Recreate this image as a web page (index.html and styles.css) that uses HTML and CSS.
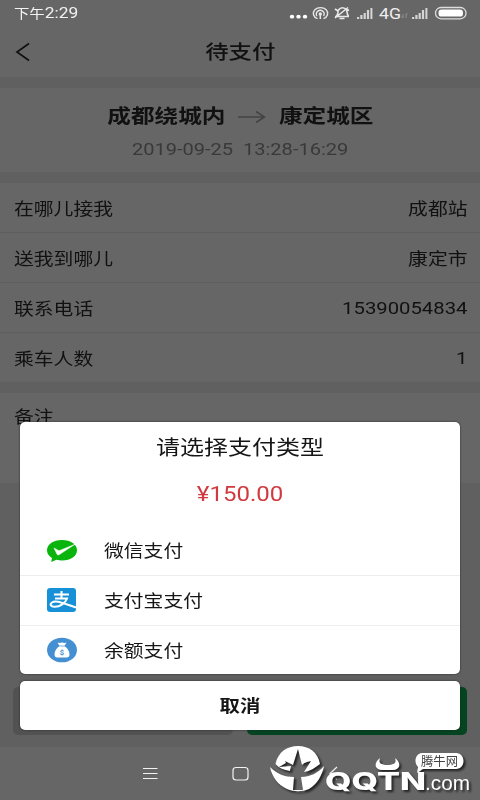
FILE: index.html
```html
<!DOCTYPE html>
<html lang="zh-CN">
<head>
<meta charset="utf-8">
<title>待支付</title>
<link rel="stylesheet" href="styles.css">
</head>
<body>
<div class="screen">
  <div class="status">
    <span class="wide left clock">下午<span class="clock-num">2:29</span></span>
    <svg class="status-icons" width="186" height="28" viewBox="0 0 186 28" fill="none" stroke="#e8e8e8">
      <g fill="#fff" stroke="none"><ellipse cx="8" cy="16.700" rx="2.200" ry="1.900"/><ellipse cx="14.500" cy="16.700" rx="2.200" ry="1.900"/><ellipse cx="21" cy="16.700" rx="2.200" ry="1.900"/></g>
      <path d="M33.500 18.700A7.200 5.800 0 1 1 39.500 18.700M33 16A4 3.500 0 1 1 39.500 16" stroke-width="1.400"/>
      <circle cx="36.300" cy="14" r="1.700" fill="#e8e8e8" stroke="none"/><path d="M36.300 14v5" stroke-width="1.500"/>
      <path d="M51 16.500h14M52.500 16c2-2 1-4 2-6 2-3 6-3 8 0 1 2 0 4 2 6M55.500 18.500h5M51 18 64 7.500M51 9l3 2M62 9l3 1.500" stroke-width="1.600"/>
      <g stroke="none" fill="#d5d5d5"><path d="M73 17h2.200v2H73zM76.300 15h2.200v4h-2.200zM79.600 13h2.200v6h-2.200zM82.900 10h2.200v9h-2.200zM86.400 8h2v11h-2zM128 17h2.200v2H128zM131.300 15h2.200v4h-2.200zM134.600 13h2.200v6h-2.200zM137.900 10h2.200v9h-2.200zM141.400 8h2v11h-2z"/></g>
      <text x="95" y="18.700" font-size="14" textLength="22" lengthAdjust="spacingAndGlyphs" fill="#eee" stroke="none">4G</text>
      <path d="M119 14v4M117.500 16.500l1.500 1.500M122 18v-4h1.500" stroke="#999" stroke-width=".8"/>
      <rect x="151.500" y="7.500" width="30.500" height="11.300" rx="5.600" stroke="#ddd" stroke-width="1.300"/><rect x="154.500" y="9.600" width="24.500" height="7" rx="3.200" fill="#fff" stroke="none"/>
    </svg>
  </div>
  <header class="header">
    <svg class="back" width="16" height="20" viewBox="0 0 16 20"><path d="M14 1.500 2 10l12 8.500" fill="none" stroke="#111" stroke-width="1.700"/></svg>
    <h1 class="wide title">待支付</h1>
  </header>
  <section class="trip">
    <div class="route">
      <div class="from"><span class="wide">成都绕城内</span></div>
      <svg class="arrow" width="28" height="14" viewBox="0 0 28 14"><path d="M0 7h26M18 1.500 26.500 7 18 12.500" fill="none" stroke="#444" stroke-width="1.500"/></svg>
      <div class="to"><span class="wide">康定城区</span></div>
    </div>
    <div class="date"><span class="wide">2019-09-25&nbsp; 13:28-16:29</span></div>
  </section>
  <section class="details">
    <div class="row"><span class="wide left">在哪儿接我</span><span class="wide right">成都站</span></div>
    <div class="row"><span class="wide left">送我到哪儿</span><span class="wide right">康定市</span></div>
    <div class="row"><span class="wide left">联系电话</span><span class="wide right num">15390054834</span></div>
    <div class="row"><span class="wide left">乘车人数</span><span class="wide right num">1</span></div>
  </section>
  <section class="remark"><span class="wide left">备注</span></section>
  <div class="actions"><div class="action"></div><div class="action primary"></div></div>
  <nav class="nav">
    <svg width="480" height="53" viewBox="0 0 480 53" fill="none" stroke="#f2f2f2"><path d="M143 21.500h14.500M143 26.500h14.500M143 31.500h14.500" stroke-width="1.200"/><rect x="233" y="20.500" width="15" height="12.500" rx="3" stroke-width="1.200"/><path d="m337 20-7 6.500 7 6" stroke-width="1.200"/></svg>
  </nav>

  <div class="sheet">
    <div class="panel">
      <div class="sheet-title"><span class="wide">请选择支付类型</span></div>
      <div class="price"><span class="wide">¥150.00</span></div>
      <div class="option">
        <svg class="pay" width="32" height="26" viewBox="0 0 32 26"><path d="M16 2C7 2 1 6.500 1 12.300c0 3.500 2 6 5 7.800l-.8 4 5.300-2.400c1.700.5 3.500.7 5.500.7 9 0 15-4.400 15-10.200S25 2 16 2z" fill="#09b50c"/><path d="m8 10 5 2.800 16-6.500-16 10.500c-.8.600-1.500.2-2-.6z" fill="#fff" stroke="#fff" stroke-width=".5"/></svg>
        <span class="wide left">微信支付</span>
      </div>
      <div class="option">
        <svg class="pay" width="32" height="26" viewBox="0 0 32 26"><rect x="1" y="0" width="29" height="24" rx="3" fill="#1691d8"/><path d="M15.500 3v7M8 6.500h15M9 10.500h12c-1.500 4.500-7 8.500-12.500 8.300-4-.2-5-2.500-2.500-4.300 4-2.700 10 .5 24 5" fill="none" stroke="#fff" stroke-width="2"/></svg>
        <span class="wide left">支付宝支付</span>
      </div>
      <div class="option">
        <svg class="pay" width="32" height="26" viewBox="0 0 32 26"><ellipse cx="16" cy="13" rx="15" ry="12.300" fill="#438fd2"/><path d="M11.500 5.500c2 1 3 0 4.500 0s2.500 1 4.500 0l-2 3.500c3 2 5 5 5 8.500 0 2-1 3-3 3h-9c-2 0-3-1-3-3 0-3.500 2-6.500 5-8.500z" fill="#fff"/><path d="M12.500 9h7" stroke="#438fd2" stroke-width=".7"/><text x="16" y="18" text-anchor="middle" font-size="7.500" font-weight="700" fill="#438fd2">$</text></svg>
        <span class="wide left">余额支付</span>
      </div>
    </div>
    <div class="cancel"><span class="wide">取消</span></div>
  </div>

  <svg class="watermark" width="215" height="60" viewBox="0 0 215 60">
    <g fill="#fff">
      <path d="M10.500 24C13 12 22 6 33 6s20 6 22 18c-5 4-10 7-16 8l7-11c-5 1-7 2-9 4L33 9l-5 16-8-4 1 2-7 4 12-1-1 5c-6-1-11-3-14.500-7z"/>
      <path d="M5 27c7 7 15 10 24 10l-1 13h10l-2-13c9 0 17-4 23-11-2 10-7 18-15 23-7 3-15 3-22 0C13 45 7 37 5 27z"/>
      <path d="M115 18c-7 5-5 12 2 12h11c7 0 9-7 2-12 2 5-1 7-7.500 7s-9.500-2-7.500-7z"/>
      <path d="M157 13h34c10 0 10 16 0 16h-33l-6 4 1-6c-5-5-2-14 4-14z"/>
      <text class="brand" x="60" y="50" font-size="24.500" textLength="101" lengthAdjust="spacingAndGlyphs">QQTN</text>
      <text class="domain" x="160" y="50" font-size="20" textLength="45" lengthAdjust="spacingAndGlyphs">.com</text>
    </g>
    <text x="156" y="26" font-size="12.500" textLength="37" lengthAdjust="spacingAndGlyphs" fill="#444">腾牛网</text>
  </svg>
</div>
</body>
</html>
```
FILE: styles.css
```css
* { box-sizing: border-box; }
body { margin: 0; font-family: Roboto, "Noto Sans CJK SC", sans-serif; }
.screen { position: relative; width: 480px; height: 800px; overflow: hidden; background: #606060; color: #111; font-size: 16.500px; display: flex; flex-direction: column; }
.wide { display: inline-block; white-space: nowrap; transform: scaleX(1.2); transform-origin: center; }
.left { transform-origin: left center; }
.right { transform-origin: right center; }

.status { height: 28px; display: flex; justify-content: space-between; align-items: center; padding: 0 10px 0 14px; background: #666; color: #f2f2f2; }
.clock { font-size: 12.800px; line-height: 28px; height: 28px; }
.clock-num { font-size: 14.500px; }
.status-icons { display: block; }
.header { height: 49px; display: flex; align-items: center; justify-content: space-between; padding: 0 199px 0 15px; background: #666; }
.back { display: block; margin-bottom: 2px; }
.title { margin: 0 11px 0 0; font-size: 19.500px; font-weight: 500; line-height: 28px; }

.trip { margin-top: 11px; height: 84px; padding-top: 15px; background: #666; }
.route { display: grid; grid-template-columns: 225px 28px 1fr; column-gap: 13px; align-items: center; height: 28px; font-size: 19.700px; font-weight: 600; line-height: 28px; }
.from { text-align: right; }
.from .wide { transform-origin: right center; }
.to .wide { transform-origin: left center; }
.date { height: 38px; line-height: 38px; text-align: center; font-size: 16.700px; color: #393939; }

.details { margin-top: 11px; background: #666; }
.row { height: 50px; padding: 0 13px 0 14px; display: flex; align-items: center; justify-content: space-between; border-bottom: 1px solid #5e5e5e; }
.row:last-child { height: 49px; border-bottom: 0; }
.num { font-size: 16.900px; padding-top: 1px; }
.remark { margin-top: 11px; height: 90px; padding: 13px 14px; background: #666; line-height: 24px; }
.actions { margin-top: 204px; height: 48px; padding: 0 13px; display: grid; grid-template-columns: 1fr 1fr; column-gap: 14px; }
.action { background: #525252; border-radius: 5px; }
.primary { background: #044421; }
.nav { margin-top: 12px; height: 53px; background: #666; }
.nav svg { display: block; }

.sheet { position: absolute; left: 20px; top: 422px; width: 440px; color: #161616; }
.panel, .cancel { background: #fff; border-radius: 5px; box-shadow: 0 0 2px #222; }
.panel { height: 252px; }
.sheet-title { height: 52px; line-height: 53px; text-align: center; font-size: 20px; }
.price { height: 52px; line-height: 41px; text-align: center; font-size: 20px; color: #d0393f; }
.option { height: 50px; display: flex; align-items: center; gap: 26px; padding-left: 26px; border-bottom: 1px solid #eee; }
.option:last-child { height: 48px; border: 0; }
.option .wide { margin-top: -1px; }
.cancel { margin-top: 7px; height: 49px; line-height: 50px; text-align: center; font-size: 17px; font-weight: 600; }

.watermark { position: absolute; left: 265px; top: 740px; filter: drop-shadow(2px 2px 1px #222); }
.brand { font-family: Inter, sans-serif; font-weight: 800; }
.domain { font-family: "Liberation Sans", sans-serif; }
```
